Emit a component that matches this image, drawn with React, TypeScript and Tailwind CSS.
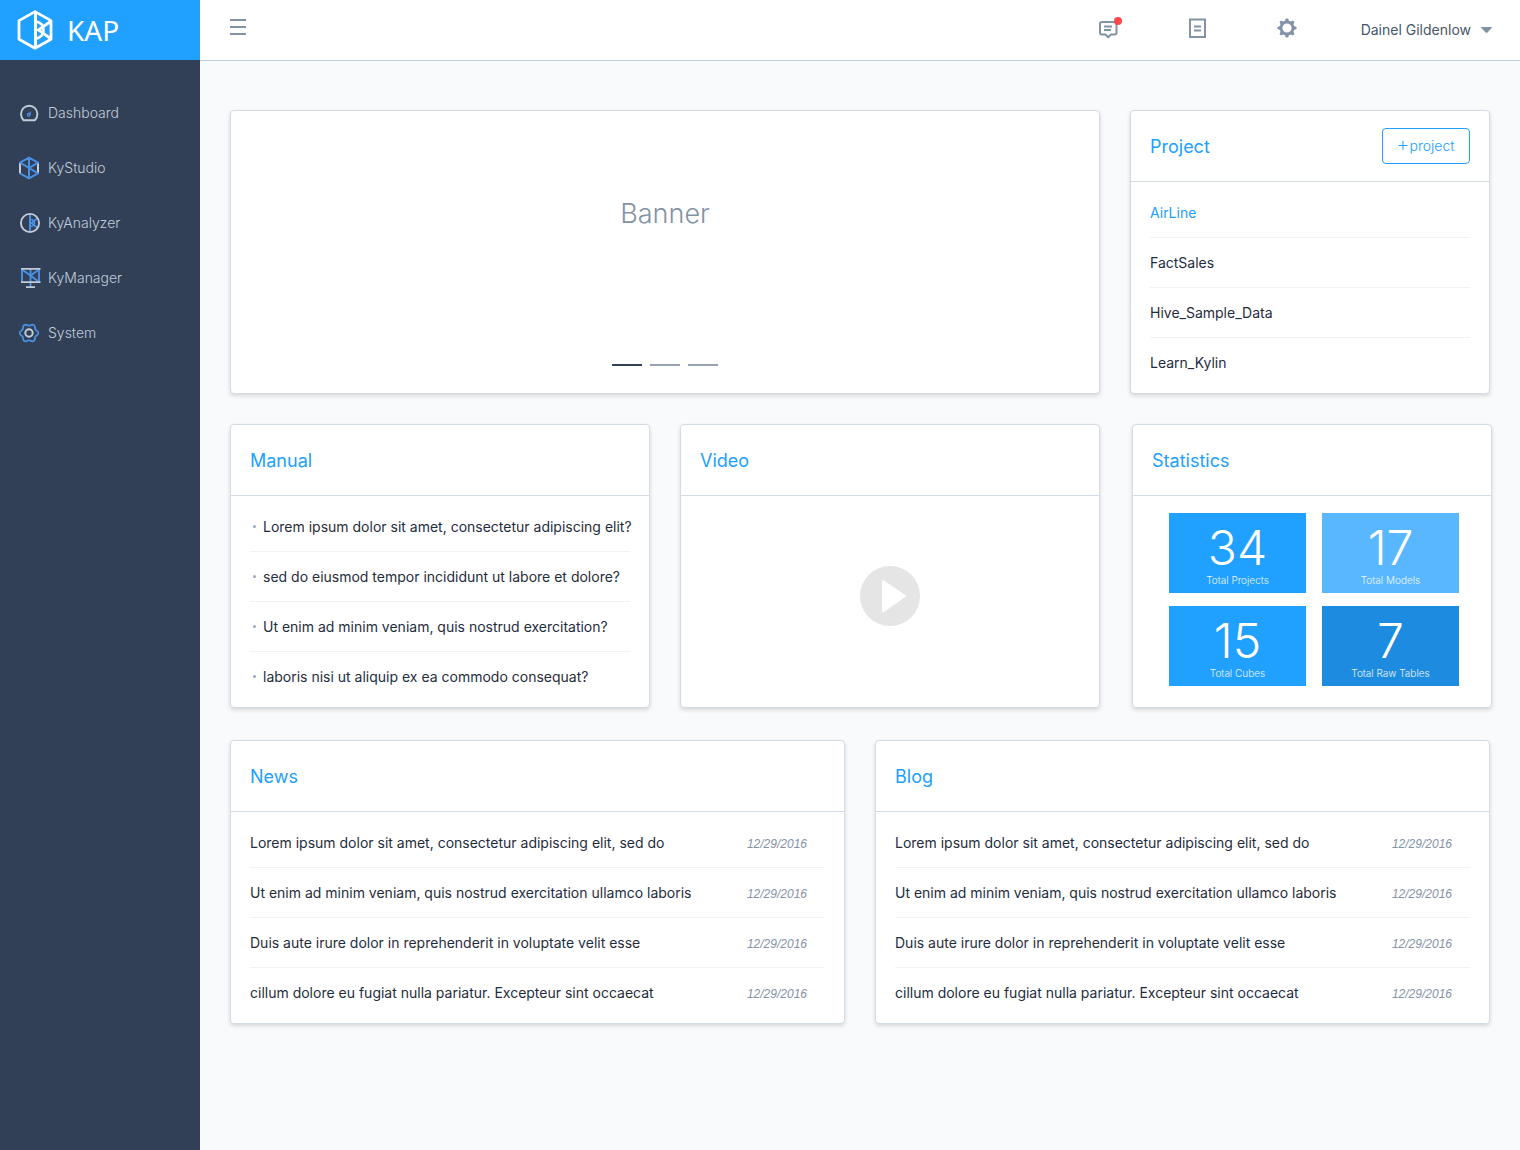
import React from "react";

const navItems = [
  { label: "Dashboard", icon: <DashboardIcon /> },
  { label: "KyStudio", icon: <StudioIcon /> },
  { label: "KyAnalyzer", icon: <AnalyzerIcon /> },
  { label: "KyManager", icon: <ManagerIcon /> },
  { label: "System", icon: <SystemIcon /> },
];

const projects = ["AirLine", "FactSales", "Hive_Sample_Data", "Learn_Kylin"];

const manual = [
  "Lorem ipsum dolor sit amet, consectetur adipiscing elit?",
  "sed do eiusmod tempor incididunt ut labore et dolore?",
  "Ut enim ad minim veniam, quis nostrud exercitation?",
  "laboris nisi ut aliquip ex ea commodo consequat?",
];

const posts = [
  "Lorem ipsum dolor sit amet, consectetur adipiscing elit, sed do",
  "Ut enim ad minim veniam, quis nostrud exercitation ullamco laboris",
  "Duis aute irure dolor in reprehenderit in voluptate velit esse",
  "cillum dolore eu fugiat nulla pariatur. Excepteur sint occaecat",
];

const stats = [
  { value: 34, label: "Total Projects", color: "bg-[#20a0ff]" },
  { value: 17, label: "Total Models", color: "bg-[#58b7ff]" },
  { value: 15, label: "Total Cubes", color: "bg-[#20a0ff]" },
  { value: 7, label: "Total Raw Tables", color: "bg-[#1d8ce0]" },
];

function Logo() {
  return (
    <svg width="36" height="40" viewBox="0 0 36 40" fill="none" stroke="#fff" strokeWidth="2.800" aria-hidden="true">
      <path d="M18 1.600 34 10.600V29.200L18 38.200 2 29.200V10.600Z" strokeLinejoin="round" />
      <path d="M18.500 2V38" strokeWidth="3" />
      <path d="M19 11.500C24 12.500 26.500 15.500 26.500 20S24 27.500 19 28.500" strokeWidth="2.600" />
      <path d="M33.500 11.500 21.500 20 33.500 28.500" strokeWidth="2.800" />
    </svg>
  );
}

function DashboardIcon() {
  return (
    <svg width="22" height="22" viewBox="0 0 22 22" fill="none" aria-hidden="true">
      <path d="M4.600 18.200C3 16.700 2 14.500 2 12A8.200 8.200 0 0 1 18.400 12C18.400 14.500 17.400 16.700 15.800 18.200Z" stroke="#c0ccda" strokeWidth="1.900" strokeLinejoin="round" />
      <circle cx="9.700" cy="12.800" r="1.300" stroke="#4a90e2" strokeWidth="1.300" />
      <path d="M11 13.300 11.200 9.800" stroke="#4a90e2" strokeWidth="1.200" />
    </svg>
  );
}

function StudioIcon() {
  return (
    <svg width="22" height="24" viewBox="1 0 22 24" fill="none" strokeWidth="2" aria-hidden="true">
      <path d="M2 6.500V17.500M20 6.500V17.500" stroke="#c0ccda" />
      <path d="M2 6.700 11 1.600 20 6.700 11 12 2 6.700M2 17.300 11 22.400 20 17.300 11 12M11 1.600V22.400" stroke="#4a90e2" strokeLinejoin="round" />
    </svg>
  );
}

function AnalyzerIcon() {
  return (
    <svg width="22" height="22" viewBox="0 0 22 22" fill="none" aria-hidden="true">
      <path d="M11 2.500V19.500M18 6.500 12.500 11 18 15.500" stroke="#4a90e2" strokeWidth="2" />
      <path d="M12 7.500C14.500 8 15.500 9.500 15.500 11S14.500 14 12 14.500" stroke="#4a90e2" strokeWidth="1.400" />
      <circle cx="11" cy="11" r="9.100" stroke="#c0ccda" strokeWidth="1.900" />
    </svg>
  );
}

function ManagerIcon() {
  return (
    <svg width="22" height="22" viewBox="0 0 22 22" fill="none" strokeWidth="1.900" aria-hidden="true">
      <path d="M3 2V15M20 2V15M11.500 2V20M3 2.500 11.500 8.500 20 2.500M11.500 8.500 20 15" stroke="#4a90e2" />
      <path d="M2 1.900H21.500M2 15.100H21.500M7 20.100H16" stroke="#c0ccda" />
    </svg>
  );
}

// Closed outline whose radius swells six times per turn.
const cogOutline =
  Array.from({ length: 120 }, (_, i) => {
    const t = (i / 120) * Math.PI * 2;
    const r = 8.3 + 0.95 * Math.cos(6 * t);
    return `${i === 0 ? "M" : "L"}${(10 + r * Math.cos(t)).toFixed(2)} ${(11 + r * Math.sin(t)).toFixed(2)}`;
  }).join("") + "Z";

function SystemIcon() {
  return (
    <svg width="22" height="22" viewBox="0 0 22 22" fill="none" aria-hidden="true">
      <path d={cogOutline} stroke="#4a90e2" strokeWidth="1.800" strokeLinejoin="round" />
      <circle cx="10" cy="11" r="3.700" stroke="#c0ccda" strokeWidth="2" />
    </svg>
  );
}

function MessageIcon() {
  return (
    <svg width="20" height="18" viewBox="0 0 20 18" fill="none" stroke="#8492a6" strokeWidth="2" aria-hidden="true">
      <path d="M3 1H15.500Q17.500 1 17.500 3V11.500Q17.500 13.500 15.500 13.500H12L9.300 16.300 6.500 13.500H3Q1 13.500 1 11.500V3Q1 1 3 1Z" strokeLinejoin="round" />
      <path d="M5 5.500H13M5 9H12" strokeWidth="1.800" />
    </svg>
  );
}

function DocumentIcon() {
  return (
    <svg width="18" height="20" viewBox="0 0 18 20" fill="none" stroke="#8492a6" strokeWidth="2" aria-hidden="true">
      <path d="M1 1.500H16V19H1ZM5 8.500H12M5 12.500H12" />
    </svg>
  );
}

function GearIcon() {
  return (
    <svg width="20" height="20" viewBox="0 0 20 20" aria-hidden="true">
      <circle cx="10" cy="10" r="6" fill="none" stroke="#8492a6" strokeWidth="2.800" />
      <g fill="#8492a6">
        {[0, 45, 90, 135, 180, 225, 270, 315].map((a) => (
          <path key={a} d="M7.800 3.600 8.900 .5H11.100L12.200 3.600Z" transform={`rotate(${a} 10 10)`} />
        ))}
      </g>
    </svg>
  );
}

function Card({ title, action, className = "", children }: { title: string; action?: React.ReactNode; className?: string; children: React.ReactNode }) {
  return (
    <section className={`flex min-w-0 flex-col rounded border border-[#d3dce6] bg-white shadow-[0_2px_4px_rgba(0,0,0,0.14)] ${className}`}>
      <header className="flex h-[71px] shrink-0 items-center justify-between border-b border-[#d3dce6] px-[19px]">
        <h2 className="pt-0.5 text-lg text-[#20a0ff]">{title}</h2>
        {action}
      </header>
      {children}
    </section>
  );
}

function List({ children }: { children: React.ReactNode }) {
  return <ul className="px-[19px] pt-1.5 pb-[5px]">{children}</ul>;
}

const rowClass = "flex h-[50px] items-center border-b border-[#eff2f7] last:border-transparent";

function PostCard({ title }: { title: string }) {
  return (
    <Card title={title} className="flex-1">
      <List>
        {posts.map((p) => (
          <li key={p} className={`${rowClass} justify-between pr-[18px]`}>
            <a href="#" className="whitespace-nowrap">{p}</a>
            <time className="pt-0.5 font-['Liberation_Sans',sans-serif] text-xs text-[#8492a6] italic">12/29/2016</time>
          </li>
        ))}
      </List>
    </Card>
  );
}

export default function App() {
  return (
    <div className="flex min-h-screen bg-[#f9fafc] font-['Inter',sans-serif] text-sm text-[#1f2d3d]">
      <aside className="w-[200px] shrink-0 bg-[#324057]">
        <a href="#" className="flex h-[60px] items-center gap-3.5 bg-[#20a0ff] pl-[17px] text-white">
          <Logo />
          <span className="font-['Noto_Sans',sans-serif] text-[28px]">KAP</span>
        </a>
        <nav className="pt-[25px]">
          {navItems.map((item) => (
            <a key={item.label} href="#" className="flex h-[55px] items-center gap-[7px] pl-[19px] font-light text-[#c0ccda]">
              {item.icon}
              {item.label}
            </a>
          ))}
        </nav>
      </aside>

      <div className="flex min-w-0 flex-1 flex-col">
        <header className="flex h-[61px] items-center justify-between border-b border-[#c0ccda] bg-white pr-7 pl-[30px]">
          <button aria-label="Toggle menu" className="flex w-4 flex-col gap-[5px] pb-1.5">
            <span className="h-0.5 bg-[#8492a6]" />
            <span className="h-0.5 bg-[#8492a6]" />
            <span className="h-0.5 bg-[#8492a6]" />
          </button>
          <div className="flex items-center">
            <button aria-label="Messages" className="relative mr-[70px]">
              <MessageIcon />
              <span className="absolute -top-1 -right-[3px] size-2 rounded-full bg-[#ff4949]" />
            </button>
            <button aria-label="Documents" className="mr-[70px] pb-1">
              <DocumentIcon />
            </button>
            <button aria-label="Settings" className="mr-16 pb-1">
              <GearIcon />
            </button>
            <button className="flex items-center gap-2.5 text-[#475669]">
              Dainel Gildenlow
              <svg width="11" height="6" viewBox="0 0 11 6" fill="#8492a6" aria-hidden="true">
                <path d="M.3 0H10.700Q11 .8 10.400 1.200L6.500 5.400Q5.500 6.300 4.500 5.400L.6 1.200Q0 .8 .3 0Z" />
              </svg>
            </button>
          </div>
        </header>

        <main className="px-[30px] pt-[49px] pb-10">
          <div className="flex gap-[30px]">
            <section className="flex h-[284px] flex-1 flex-col items-center justify-between rounded border border-[#d3dce6] bg-white pt-[84px] pb-[27px] shadow-[0_2px_4px_rgba(0,0,0,0.14)]">
              <p className="text-[27px] font-light text-[#8492a6]">Banner</p>
              <div className="flex gap-2">
                <button aria-label="Slide 1" className="h-0.5 w-[30px] bg-[#324057]" />
                <button aria-label="Slide 2" className="h-0.5 w-[30px] bg-[#99a2b4]" />
                <button aria-label="Slide 3" className="h-0.5 w-[30px] bg-[#99a2b4]" />
              </div>
            </section>
            <Card
              title="Project"
              className="w-[360px]"
              action={
                <button className="flex h-9 w-[88px] items-center justify-center gap-0.5 rounded border border-[#20a0ff] font-light text-[#20a0ff]">
                  <svg width="10" height="10" viewBox="0 0 10 10" stroke="currentColor" aria-hidden="true">
                    <path d="M.5 4.500H9.500M5 0V9" />
                  </svg>
                  project
                </button>
              }
            >
              <List>
                {projects.map((p, i) => (
                  <li key={p} className={rowClass}>
                    <a href="#" className={i === 0 ? "text-[#20a0ff]" : ""}>{p}</a>
                  </li>
                ))}
              </List>
            </Card>
          </div>

          <div className="-mr-0.5 mt-[30px] flex gap-8">
            <div className="grid min-w-0 flex-1 grid-cols-2 gap-[30px]">
              <Card title="Manual">
                <List>
                  {manual.map((m) => (
                    <li key={m} className={`${rowClass} gap-[7px] pl-[3px]`}>
                      <span className="size-[3px] shrink-0 rounded-full bg-[#99a9bf]" />
                      <a href="#" className="whitespace-nowrap">{m}</a>
                    </li>
                  ))}
                </List>
              </Card>
              <Card title="Video">
                <div className="flex flex-1 items-center justify-center pb-[11px]">
                  <button aria-label="Play video">
                    <svg width="60" height="60" viewBox="0 0 60 60" aria-hidden="true">
                      <circle cx="30" cy="30" r="30" fill="#e5e5e5" />
                      <path d="M23 15 45 30 23 45.500Z" fill="#fff" stroke="#fff" strokeWidth="2" strokeLinejoin="round" />
                    </svg>
                  </button>
                </div>
              </Card>
            </div>
            <Card title="Statistics" className="w-[360px]">
              <div className="grid grid-cols-2 gap-x-4 gap-y-[13px] pt-[17px] pr-8 pl-9">
                {stats.map((s) => (
                  <div key={s.label} className={`flex h-20 flex-col items-center pt-[11px] text-white ${s.color}`}>
                    <span className="text-5xl leading-[48px] font-light">{s.value}</span>
                    <span className="text-[10px] leading-4 font-light text-white/90">{s.label}</span>
                  </div>
                ))}
              </div>
            </Card>
          </div>

          <div className="mt-8 flex gap-[30px]">
            <PostCard title="News" />
            <PostCard title="Blog" />
          </div>
        </main>
      </div>
    </div>
  );
}
